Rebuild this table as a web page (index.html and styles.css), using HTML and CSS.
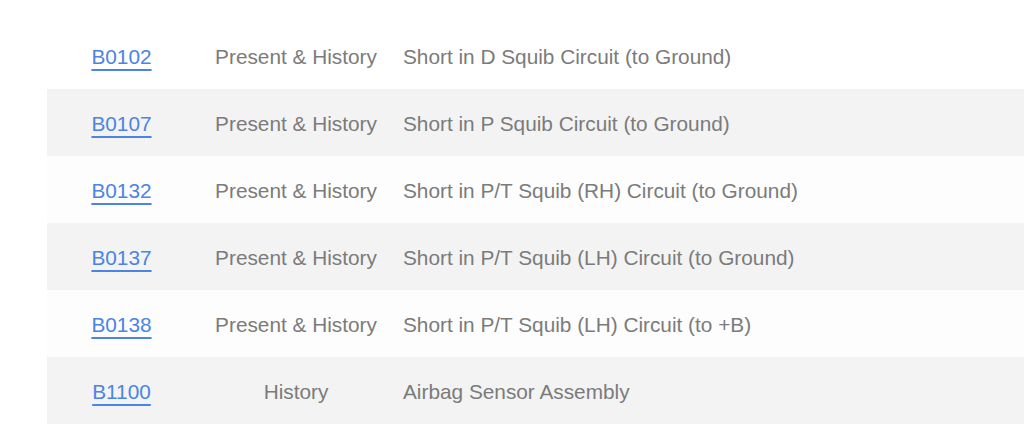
FILE: index.html
```html
<!DOCTYPE html>
<html>
<head>
  <meta charset="utf-8">
  <link rel="stylesheet" href="styles.css">
</head>
<body>
  <table class="codes">
    <tr>
      <td class="code"><a href="#">B0102</a></td>
      <td class="status">Present &amp; History</td>
      <td class="desc">Short in D Squib Circuit (to Ground)</td>
    </tr>
    <tr>
      <td class="code"><a href="#">B0107</a></td>
      <td class="status">Present &amp; History</td>
      <td class="desc">Short in P Squib Circuit (to Ground)</td>
    </tr>
    <tr>
      <td class="code"><a href="#">B0132</a></td>
      <td class="status">Present &amp; History</td>
      <td class="desc">Short in P/T Squib (RH) Circuit (to Ground)</td>
    </tr>
    <tr>
      <td class="code"><a href="#">B0137</a></td>
      <td class="status">Present &amp; History</td>
      <td class="desc">Short in P/T Squib (LH) Circuit (to Ground)</td>
    </tr>
    <tr>
      <td class="code"><a href="#">B0138</a></td>
      <td class="status">Present &amp; History</td>
      <td class="desc">Short in P/T Squib (LH) Circuit (to +B)</td>
    </tr>
    <tr>
      <td class="code"><a href="#">B1100</a></td>
      <td class="status">History</td>
      <td class="desc">Airbag Sensor Assembly</td>
    </tr>
  </table>
</body>
</html>
```

FILE: styles.css
```css
body {
  margin: 0;
  padding-top: 22px;
  background-color: #fff;
  font-family: "Liberation Sans", Arial, sans-serif;
  overflow: hidden;
}
.codes {
  margin-left: 47px;
  width: 1000px;
  border-collapse: collapse;
  font-size: 20.8px;
  color: #7b7b7b;
}
.codes tr {
  height: 67px;
  background-color: #fdfdfd;
}
.codes tr:first-child {
  background-color: #fff;
}
.codes tr:nth-child(even) {
  background-color: #f3f3f3;
}
.codes td {
  padding: 3px 0 0;
  vertical-align: middle;
}
.code {
  width: 149px;
  text-align: center;
}
.code a {
  color: #4a84e6;
  text-decoration: underline;
  text-decoration-thickness: 2px;
  text-underline-offset: 5px;
}
.status {
  width: 200px;
  text-align: center;
}
.codes .desc {
  padding-left: 7px;
}
```
